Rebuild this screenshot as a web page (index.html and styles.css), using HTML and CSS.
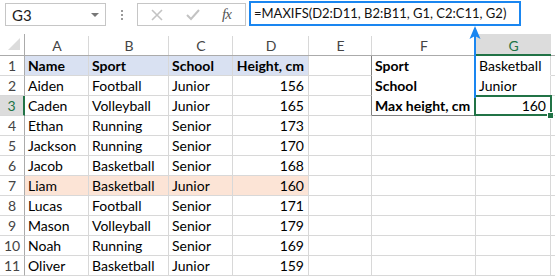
FILE: index.html
```html
<!DOCTYPE html>
<html>
<head>
<meta charset="utf-8">
<link rel="stylesheet" href="styles.css">
</head>
<body>
<div class="app">
  <div class="topbar">
    <div class="namebox"><span class="nb-text">G3</span><span class="nb-caret"></span></div>
    <div class="sep"><span></span><span></span><span></span></div>
    <div class="tools">
      <svg class="ico-x" width="12" height="12" viewBox="0 0 12 12"><path d="M1 1 L11 11 M11 1 L1 11" stroke="#c3c3c3" stroke-width="1.6" fill="none"/></svg>
      <svg class="ico-check" width="14" height="12" viewBox="0 0 14 12"><path d="M1 6 L5 10 L13 1" stroke="#c3c3c3" stroke-width="2" fill="none"/></svg>
      <span class="fx">fx</span>
    </div>
    <div class="formula">=MAXIFS(D2:D11, B2:B11, G1, C2:C11, G2)</div>
  </div>

  <div class="sheet">
    <div class="corner"><svg width="14" height="14" viewBox="0 0 14 14"><polygon points="13,1 13,13 1,13" fill="#dcdcdc"/></svg></div>
    <div class="ch">A</div><div class="ch">B</div><div class="ch">C</div><div class="ch">D</div><div class="ch">E</div><div class="ch">F</div><div class="ch ch-sel">G</div><div class="ch ch-end"></div>

    <div class="rh">1</div>
    <div class="c hdr">Name</div><div class="c hdr">Sport</div><div class="c hdr">School</div><div class="c hdr num">Height, cm</div>
    <div class="c e-edge"></div><div class="c f b nobot">Sport</div><div class="c g nobot">Basketball</div><div class="c end"></div>

    <div class="rh">2</div>
    <div class="c">Aiden</div><div class="c">Football</div><div class="c">Junior</div><div class="c num">156</div>
    <div class="c e-edge"></div><div class="c f b nobot">School</div><div class="c g nobot">Junior</div><div class="c end"></div>

    <div class="rh rh-sel">3</div>
    <div class="c">Caden</div><div class="c">Volleyball</div><div class="c">Junior</div><div class="c num">165</div>
    <div class="c e-edge"></div><div class="c f b fbot">Max height, cm</div><div class="c g num sel">160</div><div class="c end"></div>

    <div class="rh">4</div>
    <div class="c">Ethan</div><div class="c">Running</div><div class="c">Senior</div><div class="c num">173</div>
    <div class="c"></div><div class="c"></div><div class="c"></div><div class="c end"></div>

    <div class="rh">5</div>
    <div class="c">Jackson</div><div class="c">Running</div><div class="c">Senior</div><div class="c num">170</div>
    <div class="c"></div><div class="c"></div><div class="c"></div><div class="c end"></div>

    <div class="rh">6</div>
    <div class="c">Jacob</div><div class="c">Basketball</div><div class="c">Senior</div><div class="c num">168</div>
    <div class="c"></div><div class="c"></div><div class="c"></div><div class="c end"></div>

    <div class="rh">7</div>
    <div class="c hl">Liam</div><div class="c hl">Basketball</div><div class="c hl">Junior</div><div class="c hl num">160</div>
    <div class="c"></div><div class="c"></div><div class="c"></div><div class="c end"></div>

    <div class="rh">8</div>
    <div class="c">Lucas</div><div class="c">Football</div><div class="c">Senior</div><div class="c num">171</div>
    <div class="c"></div><div class="c"></div><div class="c"></div><div class="c end"></div>

    <div class="rh">9</div>
    <div class="c">Mason</div><div class="c">Volleyball</div><div class="c">Senior</div><div class="c num">179</div>
    <div class="c"></div><div class="c"></div><div class="c"></div><div class="c end"></div>

    <div class="rh">10</div>
    <div class="c">Noah</div><div class="c">Running</div><div class="c">Senior</div><div class="c num">169</div>
    <div class="c"></div><div class="c"></div><div class="c"></div><div class="c end"></div>

    <div class="rh">11</div>
    <div class="c">Oliver</div><div class="c">Basketball</div><div class="c">Junior</div><div class="c num">159</div>
    <div class="c"></div><div class="c"></div><div class="c"></div><div class="c end"></div>
  </div>

  <svg class="arrow" width="14" height="72" viewBox="0 0 14 72">
    <line x1="7" y1="8" x2="7" y2="72" stroke="#1a86f0" stroke-width="2"/>
    <polygon points="7,0 12.5,13 7,10 1.5,13" fill="#1a86f0"/>
  </svg>
</div>
</body>
</html>
```

FILE: styles.css
```css
html, body {
  margin: 0;
  padding: 0;
  background: #fff;
}

.app {
  position: relative;
  width: 555px;
  height: 277px;
  overflow: hidden;
  font-family: Lato, "Open Sans", sans-serif;
}

.topbar {
  display: flex;
  align-items: flex-start;
  height: 34px;
}

.namebox {
  box-sizing: border-box;
  margin: 3px 0 0 5px;
  width: 101px;
  height: 23px;
  border: 1px solid #c6c6c6;
  display: flex;
  align-items: center;
  justify-content: space-between;
  padding: 0 6px 0 6px;
}

.nb-text {
  font-size: 15px;
  color: #222;
}

.nb-caret {
  width: 0;
  height: 0;
  border-left: 4px solid transparent;
  border-right: 4px solid transparent;
  border-top: 4px solid #777;
}

.sep {
  width: 31px;
  height: 23px;
  margin-top: 3px;
  display: flex;
  flex-direction: column;
  align-items: center;
  justify-content: center;
  gap: 2px;
}

.sep span {
  width: 2px;
  height: 2px;
  background: #9a9a9a;
}

.tools {
  box-sizing: border-box;
  margin-top: 3px;
  width: 109px;
  height: 23px;
  border: 1px solid #c6c6c6;
  display: flex;
  align-items: center;
  padding-left: 13px;
}

.ico-x { margin-right: 23px; }
.ico-check { margin-right: 22px; }

.fx {
  font-family: "Liberation Serif", serif;
  font-style: italic;
  font-size: 15px;
  color: #555;
  letter-spacing: -1px;
}

.formula {
  box-sizing: border-box;
  margin: 1px 0 0 3px;
  width: 272px;
  height: 25px;
  border: 2px solid #1a86f0;
  font-size: 13px;
  line-height: 21px;
  padding-left: 3px;
  color: #111;
  white-space: nowrap;
}

.sheet {
  display: grid;
  grid-template-columns: 25px 64px 80px 64px 76px 63px 104px 75px 4px;
  grid-template-rows: 22px repeat(11, 20px);
  font-size: 14px;
}

.corner {
  box-sizing: border-box;
  border-right: 1px solid #ababab;
  border-bottom: 1px solid #ababab;
  display: flex;
  align-items: flex-end;
  justify-content: flex-end;
  padding: 0 3px 4px 0;
}

.ch {
  box-sizing: border-box;
  border-bottom: 1px solid #ababab;
  background: linear-gradient(#d8d8d8, #d8d8d8) right bottom / 1px 19px no-repeat;
  text-align: center;
  color: #444;
  font-size: 14px;
  line-height: 24px;
}

.ch-sel {
  background: #dcdcdc;
  border-bottom: 2px solid #217346;
  color: #217346;
  line-height: 23px;
}

.ch-end { background: none; }

.rh {
  box-sizing: border-box;
  border-right: 1px solid #ababab;
  border-bottom: 1px solid #d8d8d8;
  text-align: center;
  color: #444;
  line-height: 20px;
  font-size: 14px;
}

.rh-sel {
  background: #dcdcdc;
  border-right: 2px solid #217346;
  color: #217346;
}

.c {
  box-sizing: border-box;
  border-right: 1px solid #d8d8d8;
  border-bottom: 1px solid #d8d8d8;
  padding: 0 3px;
  line-height: 20px;
  white-space: nowrap;
  color: #000;
}

.c.end { border-right: none; }

.num { text-align: right; padding-right: 4px; }

.hdr {
  background: #d9e1f2;
  font-weight: bold;
}

.hl { background: #fce4d6; }

.b { font-weight: bold; }

.e-edge { border-right-color: #808080; }

.f { border-right-color: #808080; }

.nobot { border-bottom-color: #fff; }

.fbot { border-bottom-color: #808080; }

.sel {
  position: relative;
  overflow: visible;
}

.sel::after {
  content: "";
  position: absolute;
  left: -2px;
  top: -1px;
  right: -2px;
  bottom: -1px;
  border: 2px solid #217346;
}

.sel::before {
  content: "";
  position: absolute;
  right: -4px;
  bottom: -4px;
  width: 5px;
  height: 5px;
  background: #217346;
  border: 1px solid #fff;
  z-index: 2;
}

.arrow {
  position: absolute;
  left: 468px;
  top: 26px;
}
```
